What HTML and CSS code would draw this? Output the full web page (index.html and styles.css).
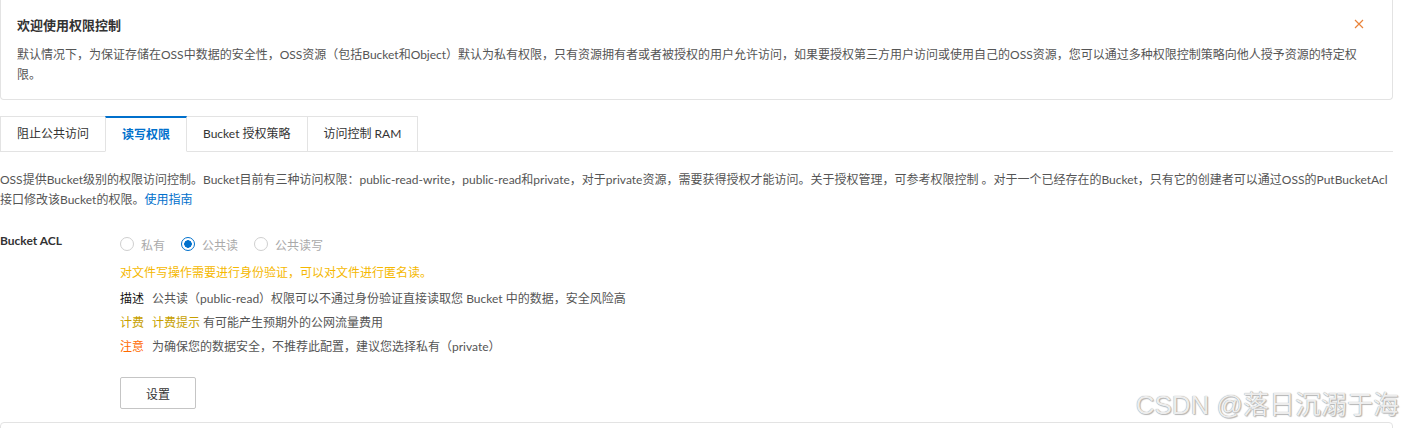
FILE: index.html
```html
<!DOCTYPE html>
<html lang="zh-CN">
<head>
    <meta charset="UTF-8">
    <meta name="viewport" content="width=device-width, initial-scale=1.0">
    <title>读写权限</title>
    <link rel="stylesheet" href="styles.css">
</head>
<body>

    <div class="page">
        <div class="alert">
            <div class="alert-head">
                <h4>欢迎使用权限控制</h4>
                <span class="alert-close">
                    <svg width="10" height="10" viewBox="0 0 10 10"><path d="M1 1L9 9M9 1L1 9" stroke="currentColor" stroke-width="1.2" fill="none"/></svg>
                </span>
            </div>
            <p class="alert-text">默认情况下，为保证存储在OSS中数据的安全性，OSS资源（包括Bucket和Object）默认为私有权限，只有资源拥有者或者被授权的用户允许访问，如果要授权第三方用户访问或使用自己的OSS资源，您可以通过多种权限控制策略向他人授予资源的特定权限。</p>
        </div>

        <div class="tabs">
            <div class="tab">阻止公共访问</div>
            <div class="tab active">读写权限</div>
            <div class="tab">Bucket 授权策略</div>
            <div class="tab">访问控制 RAM</div>
        </div>

        <p class="intro">OSS提供Bucket级别的权限访问控制。Bucket目前有三种访问权限：public-read-write，public-read和private，对于private资源，需要获得授权才能访问。关于授权管理，可参考权限控制 。对于一个已经存在的Bucket，只有它的创建者可以通过OSS的PutBucketAcl接口修改该Bucket的权限。<a href="#">使用指南</a></p>

        <div class="form-row">
            <label class="form-label">Bucket ACL</label>
            <div class="form-body">
                <div class="radios">
                    <span class="radio"><i class="dot"></i>私有</span>
                    <span class="radio checked"><i class="dot"></i>公共读</span>
                    <span class="radio"><i class="dot"></i>公共读写</span>
                </div>
                <p class="warn">对文件写操作需要进行身份验证，可以对文件进行匿名读。</p>
                <p class="info"><b class="k-desc">描述</b>公共读（public-read）权限可以不通过身份验证直接读取您 Bucket 中的数据，安全风险高</p>
                <p class="info"><b class="k-fee">计费</b><span class="fee">计费提示</span> 有可能产生预期外的公网流量费用</p>
                <p class="info"><b class="k-note">注意</b>为确保您的数据安全，不推荐此配置，建议您选择私有（private）</p>
                <button class="btn">设置</button>
            </div>
        </div>

        <div class="next-box"></div>
    </div>

    <div class="watermark">CSDN @落日沉溺于海</div>

</body>
</html>
```

FILE: styles.css
```css
/* base */
* {
    margin: 0;
    padding: 0;
    box-sizing: border-box;
}

body {
    font-family: "Lato", "Noto Sans CJK SC", sans-serif;
    font-size: 12px;
    color: #555;
    background: #fff;
    height: 428px;
    overflow: hidden;
}

.page {
    width: 1393px;
}

/* alert */
.alert {
    border: 1px solid #e3e3e3;
    border-top: none;
    border-radius: 0 0 4px 4px;
    padding: 14px 16px 14px 16px;
}

.alert-head {
    display: flex;
    justify-content: space-between;
    align-items: center;
    height: 20px;
}

.alert-head h4 {
    font-size: 13px;
    font-weight: bold;
    color: #333;
}

.alert-close {
    color: #e9833a;
    margin-right: 12px;
    display: flex;
}

.alert-text {
    margin-top: 9px;
    line-height: 20px;
    padding-top: 2px;
    padding-right: 10px;
}

/* tabs */
.tabs {
    display: flex;
    margin-top: 16px;
    border-bottom: 1px solid #e3e3e3;
    height: 36px;
}

.tab {
    height: 36px;
    padding: 0 16px;
    line-height: 34px;
    border: 1px solid #e3e3e3;
    margin-left: -1px;
    color: #333;
    background: #fff;
}

.tab:first-child {
    margin-left: 0;
}

.tab.active {
    color: #0070cc;
    font-weight: bold;
    border-top: 2px solid #0070cc;
    border-bottom-color: #fff;
    line-height: 33px;
    position: relative;
    z-index: 1;
}

/* intro */
.intro {
    margin-top: 18px;
    line-height: 20px;
    color: #555;
}

.intro a {
    color: #0070cc;
    text-decoration: none;
}

/* form */
.form-row {
    display: flex;
    margin-top: 24px;
}

.form-label {
    width: 120px;
    font-weight: bold;
    color: #333;
    line-height: 20px;
    margin-top: -3px;
}

.radios {
    display: flex;
    gap: 16px;
    height: 20px;
    align-items: center;
}

.radio {
    display: flex;
    align-items: center;
    color: #aaa;
}

.dot {
    width: 14px;
    height: 14px;
    border: 1px solid #cfcfcf;
    border-radius: 50%;
    margin-right: 7px;
    background: #fff;
}

.radio.checked .dot {
    border-color: #0070cc;
    background: radial-gradient(circle, #0070cc 0 3.5px, #fff 4px);
}

.warn {
    color: #f5b800;
    margin-top: 9px;
    height: 20px;
    line-height: 20px;
}

.info {
    margin-top: 4px;
    height: 20px;
    line-height: 20px;
    color: #555;
}

.warn + .info {
    margin-top: 6px;
}

.info b {
    font-weight: normal;
    margin-right: 8px;
}

.k-desc {
    color: #111;
}

.k-fee, .fee {
    color: #c79f00;
}

.k-note {
    color: #ff6a00;
}

.btn {
    margin-top: 20px;
    width: 76px;
    height: 32px;
    border: 1px solid #c5c5c5;
    border-radius: 2px;
    background: #fff;
    color: #333;
    font-family: inherit;
    font-size: 12px;
}

.next-box {
    margin-top: 13px;
    height: 20px;
    border: 1px solid #e3e3e3;
    border-radius: 4px 4px 0 0;
}

/* watermark */
.watermark {
    position: absolute;
    right: 6px;
    top: 384px;
    font-family: "Liberation Sans", "Noto Sans CJK SC", sans-serif;
    font-size: 26px;
    color: #ededed;
    text-shadow: 0 0 1px #888, 1px 1px 1px #bbb;
}
```
